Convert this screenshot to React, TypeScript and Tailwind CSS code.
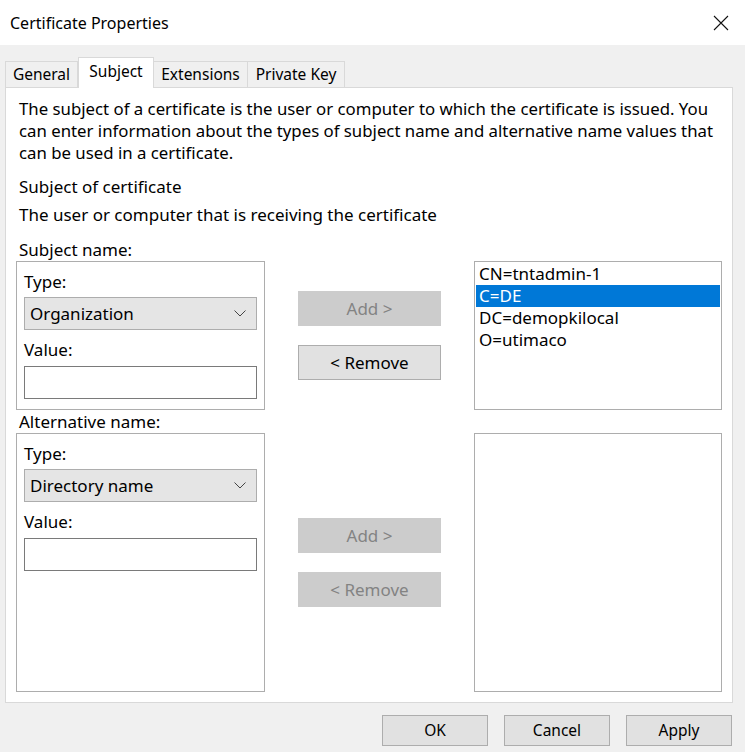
import React from 'react';

const font = { fontFamily: '"Noto Sans", "Open Sans", sans-serif' };

function Dropdown({ value }: { value: string }) {
  return (
    <div className="flex items-center justify-between h-[33px] bg-[#e5e5e5] border border-[#adadad] pl-[5px] pr-[10px] text-black">
      <span>{value}</span>
      <svg width="12" height="7" viewBox="0 0 12 7" fill="none">
        <path d="M0.5 0.5 L6 6 L11.5 0.5" stroke="#444" strokeWidth="1" />
      </svg>
    </div>
  );
}

function NameBox({ type, height }: { type: string; height: string }) {
  return (
    <div className={`border border-[#adadad] px-[7px] pt-[9px] flex flex-col ${height}`}>
      <div className="leading-[22px]">Type:</div>
      <div className="mt-[4px]">
        <Dropdown value={type} />
      </div>
      <div className="leading-[22px] mt-[9px]">Value:</div>
      <div className="mt-[5px] h-[33px] border border-[#7a7a7a] bg-white" />
    </div>
  );
}

function Btn({ label, disabled }: { label: string; disabled?: boolean }) {
  return (
    <div
      className={`h-[35px] flex items-center justify-center border ${
        disabled ? 'bg-[#cccccc] border-[#cccccc] text-[#838383]' : 'bg-[#e1e1e1] border-[#adadad] text-black'
      }`}
    >
      {label}
    </div>
  );
}

const entries = ['CN=tntadmin-1', 'C=DE', 'DC=demopkilocal', 'O=utimaco'];

export default function App() {
  return (
    <div className="w-[745px] h-[752px] bg-[#f0f0f0] text-black overflow-hidden" style={font}>
      {/* title bar */}
      <div className="h-[45px] bg-white flex items-center justify-between pl-[10px] pr-[16px]">
        <span className="text-[16px]">Certificate Properties</span>
        <svg width="16" height="16" viewBox="0 0 16 16">
          <path d="M1 1 L15 15 M15 1 L1 15" stroke="#111" strokeWidth="1.1" />
        </svg>
      </div>

      {/* tabs */}
      <div className="flex items-end h-[31px] mt-[11px] pl-[5px] text-[15.5px]">
        <div className="h-[26px] w-[73px] flex items-center justify-center border border-[#d9d9d9] border-b-0 bg-[#f0f0f0]">
          General
        </div>
        <div className="h-[31px] w-[76px] -mb-px relative z-10 flex items-start pt-[2px] justify-center border border-[#d9d9d9] border-b-0 bg-white">
          Subject
        </div>
        <div className="h-[26px] w-[94px] flex items-center justify-center border border-[#d9d9d9] border-b-0 border-l-0 bg-[#f0f0f0]">
          Extensions
        </div>
        <div className="h-[26px] w-[97px] flex items-center justify-center border border-[#d9d9d9] border-b-0 border-l-0 bg-[#f0f0f0]">
          Private Key
        </div>
      </div>

      {/* panel */}
      <div className="ml-[5px] w-[728px] h-[616px] bg-white border border-[#d9d9d9] pt-[10px] text-[17px]">
        <p className="px-[13px] leading-[22px] whitespace-nowrap text-[16.8px]">
          The subject of a certificate is the user or computer to which the certificate is issued. You
          <br />
          can enter information about the types of subject name and alternative name values that
          <br />
          can be used in a certificate.
        </p>
        <p className="px-[13px] leading-[22px] mt-[12px]">Subject of certificate</p>
        <p className="px-[13px] leading-[22px] mt-[6px]">The user or computer that is receiving the certificate</p>

        <div className="pl-[10px] pr-[9px]">
          <div className="px-[3px] leading-[22px] mt-[13px]">Subject name:</div>
          <div className="grid grid-cols-[249px_143px_248px] gap-x-[33px]">
            <NameBox type="Organization" height="h-[149px]" />
            <div className="flex flex-col pt-[30px] gap-[19px]">
              <Btn label="Add >" disabled />
              <Btn label="< Remove" />
            </div>
            <div className="border border-[#adadad] h-[149px] p-px">
              {entries.map((e, i) => (
                <div
                  key={e}
                  className={`h-[22px] leading-[22px] pl-[3px] ${i === 1 ? 'bg-[#0078d7] text-white' : ''}`}
                >
                  {e}
                </div>
              ))}
            </div>
          </div>

          <div className="px-[3px] leading-[23px]">Alternative name:</div>
          <div className="grid grid-cols-[249px_143px_248px] gap-x-[33px]">
            <NameBox type="Directory name" height="h-[259px]" />
            <div className="flex flex-col pt-[85px] gap-[19px]">
              <Btn label="Add >" disabled />
              <Btn label="< Remove" disabled />
            </div>
            <div className="border border-[#adadad] h-[259px] bg-white" />
          </div>
        </div>
      </div>

      {/* footer buttons */}
      <div className="flex justify-end gap-[16px] pr-[13px] mt-[12px]">
        {['OK', 'Cancel', 'Apply'].map((l) => (
          <div
            key={l}
            className="w-[106px] h-[31px] flex items-center justify-center bg-[#e1e1e1] border border-[#adadad] text-[15.5px]"
          >
            {l}
          </div>
        ))}
      </div>
    </div>
  );
}
